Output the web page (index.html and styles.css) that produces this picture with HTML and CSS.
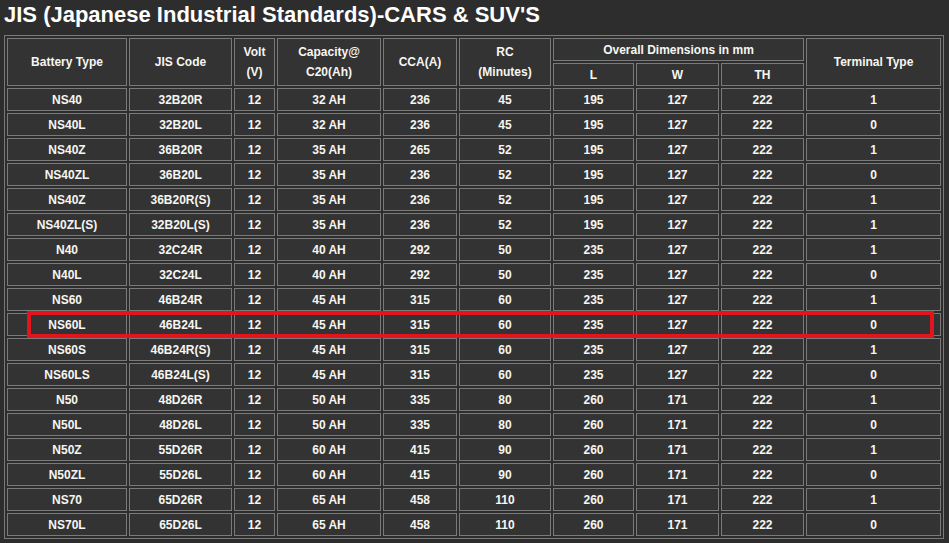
FILE: index.html
```html
<!DOCTYPE html>
<html>
<head>
<meta charset="utf-8">
<link rel="stylesheet" href="styles.css">
</head>
<body>
<h1 class="title">JIS (Japanese Industrial Standards)-CARS &amp; SUV'S</h1>
<div class="wrap">
<table class="spec">
<colgroup>
<col class="c1"><col class="c2"><col class="c3"><col class="c4"><col class="c5"><col class="c6"><col class="c7"><col class="c8"><col class="c9"><col class="c10">
</colgroup>
<thead>
<tr>
<th rowspan="2">Battery Type</th>
<th rowspan="2">JIS Code</th>
<th rowspan="2">Volt<br>(V)</th>
<th rowspan="2">Capacity@<br>C20(Ah)</th>
<th rowspan="2">CCA(A)</th>
<th rowspan="2">RC<br>(Minutes)</th>
<th colspan="3">Overall Dimensions in mm</th>
<th rowspan="2">Terminal Type</th>
</tr>
<tr><th>L</th><th>W</th><th>TH</th></tr>
</thead>
<tbody>
<tr><td>NS40</td><td>32B20R</td><td>12</td><td>32 AH</td><td>236</td><td>45</td><td>195</td><td>127</td><td>222</td><td>1</td></tr>
<tr><td>NS40L</td><td>32B20L</td><td>12</td><td>32 AH</td><td>236</td><td>45</td><td>195</td><td>127</td><td>222</td><td>0</td></tr>
<tr><td>NS40Z</td><td>36B20R</td><td>12</td><td>35 AH</td><td>265</td><td>52</td><td>195</td><td>127</td><td>222</td><td>1</td></tr>
<tr><td>NS40ZL</td><td>36B20L</td><td>12</td><td>35 AH</td><td>236</td><td>52</td><td>195</td><td>127</td><td>222</td><td>0</td></tr>
<tr><td>NS40Z</td><td>36B20R(S)</td><td>12</td><td>35 AH</td><td>236</td><td>52</td><td>195</td><td>127</td><td>222</td><td>1</td></tr>
<tr><td>NS40ZL(S)</td><td>32B20L(S)</td><td>12</td><td>35 AH</td><td>236</td><td>52</td><td>195</td><td>127</td><td>222</td><td>1</td></tr>
<tr><td>N40</td><td>32C24R</td><td>12</td><td>40 AH</td><td>292</td><td>50</td><td>235</td><td>127</td><td>222</td><td>1</td></tr>
<tr><td>N40L</td><td>32C24L</td><td>12</td><td>40 AH</td><td>292</td><td>50</td><td>235</td><td>127</td><td>222</td><td>0</td></tr>
<tr><td>NS60</td><td>46B24R</td><td>12</td><td>45 AH</td><td>315</td><td>60</td><td>235</td><td>127</td><td>222</td><td>1</td></tr>
<tr><td>NS60L</td><td>46B24L</td><td>12</td><td>45 AH</td><td>315</td><td>60</td><td>235</td><td>127</td><td>222</td><td>0</td></tr>
<tr><td>NS60S</td><td>46B24R(S)</td><td>12</td><td>45 AH</td><td>315</td><td>60</td><td>235</td><td>127</td><td>222</td><td>1</td></tr>
<tr><td>NS60LS</td><td>46B24L(S)</td><td>12</td><td>45 AH</td><td>315</td><td>60</td><td>235</td><td>127</td><td>222</td><td>0</td></tr>
<tr><td>N50</td><td>48D26R</td><td>12</td><td>50 AH</td><td>335</td><td>80</td><td>260</td><td>171</td><td>222</td><td>1</td></tr>
<tr><td>N50L</td><td>48D26L</td><td>12</td><td>50 AH</td><td>335</td><td>80</td><td>260</td><td>171</td><td>222</td><td>0</td></tr>
<tr><td>N50Z</td><td>55D26R</td><td>12</td><td>60 AH</td><td>415</td><td>90</td><td>260</td><td>171</td><td>222</td><td>1</td></tr>
<tr><td>N50ZL</td><td>55D26L</td><td>12</td><td>60 AH</td><td>415</td><td>90</td><td>260</td><td>171</td><td>222</td><td>0</td></tr>
<tr><td>NS70</td><td>65D26R</td><td>12</td><td>65 AH</td><td>458</td><td>110</td><td>260</td><td>171</td><td>222</td><td>1</td></tr>
<tr><td>NS70L</td><td>65D26L</td><td>12</td><td>65 AH</td><td>458</td><td>110</td><td>260</td><td>171</td><td>222</td><td>0</td></tr>
</tbody>
</table>
<div class="highlight"></div>
</div>
</body>
</html>
```

FILE: styles.css
```css
html, body {
  margin: 0;
  padding: 0;
  background: #2d2d2d;
}
body {
  padding: 0 4px;
  font-family: "Liberation Sans", Arial, sans-serif;
  color: #f6f6f2;
}
.title {
  margin: 0 0 5px 0;
  font-size: 22px;
  line-height: 30px;
  font-weight: bold;
  color: #ffffff;
}
.wrap {
  position: relative;
  width: 940px;
}
.spec {
  table-layout: fixed;
  width: 940px;
  border: 1px solid #7a7a7a;
  border-collapse: separate;
  border-spacing: 2px;
}
.c1 { width: 120px; }
.c2 { width: 103px; }
.c3 { width: 41px; }
.c4 { width: 104px; }
.c5 { width: 74px; }
.c6 { width: 92px; }
.c7 { width: 81px; }
.c8 { width: 83px; }
.c9 { width: 83px; }
.c10 { width: 135px; }
.spec th,
.spec td {
  border: 1px solid #7a7a7a;
  background: #333333;
  padding: 0;
  height: 23px;
  text-align: center;
  vertical-align: middle;
  font-size: 12px;
  font-weight: bold;
  line-height: 20px;
  box-sizing: border-box;
}
.highlight {
  position: absolute;
  left: 23px;
  top: 276px;
  width: 907px;
  height: 27px;
  border: 4px solid #e3141c;
  box-sizing: border-box;
}
```
